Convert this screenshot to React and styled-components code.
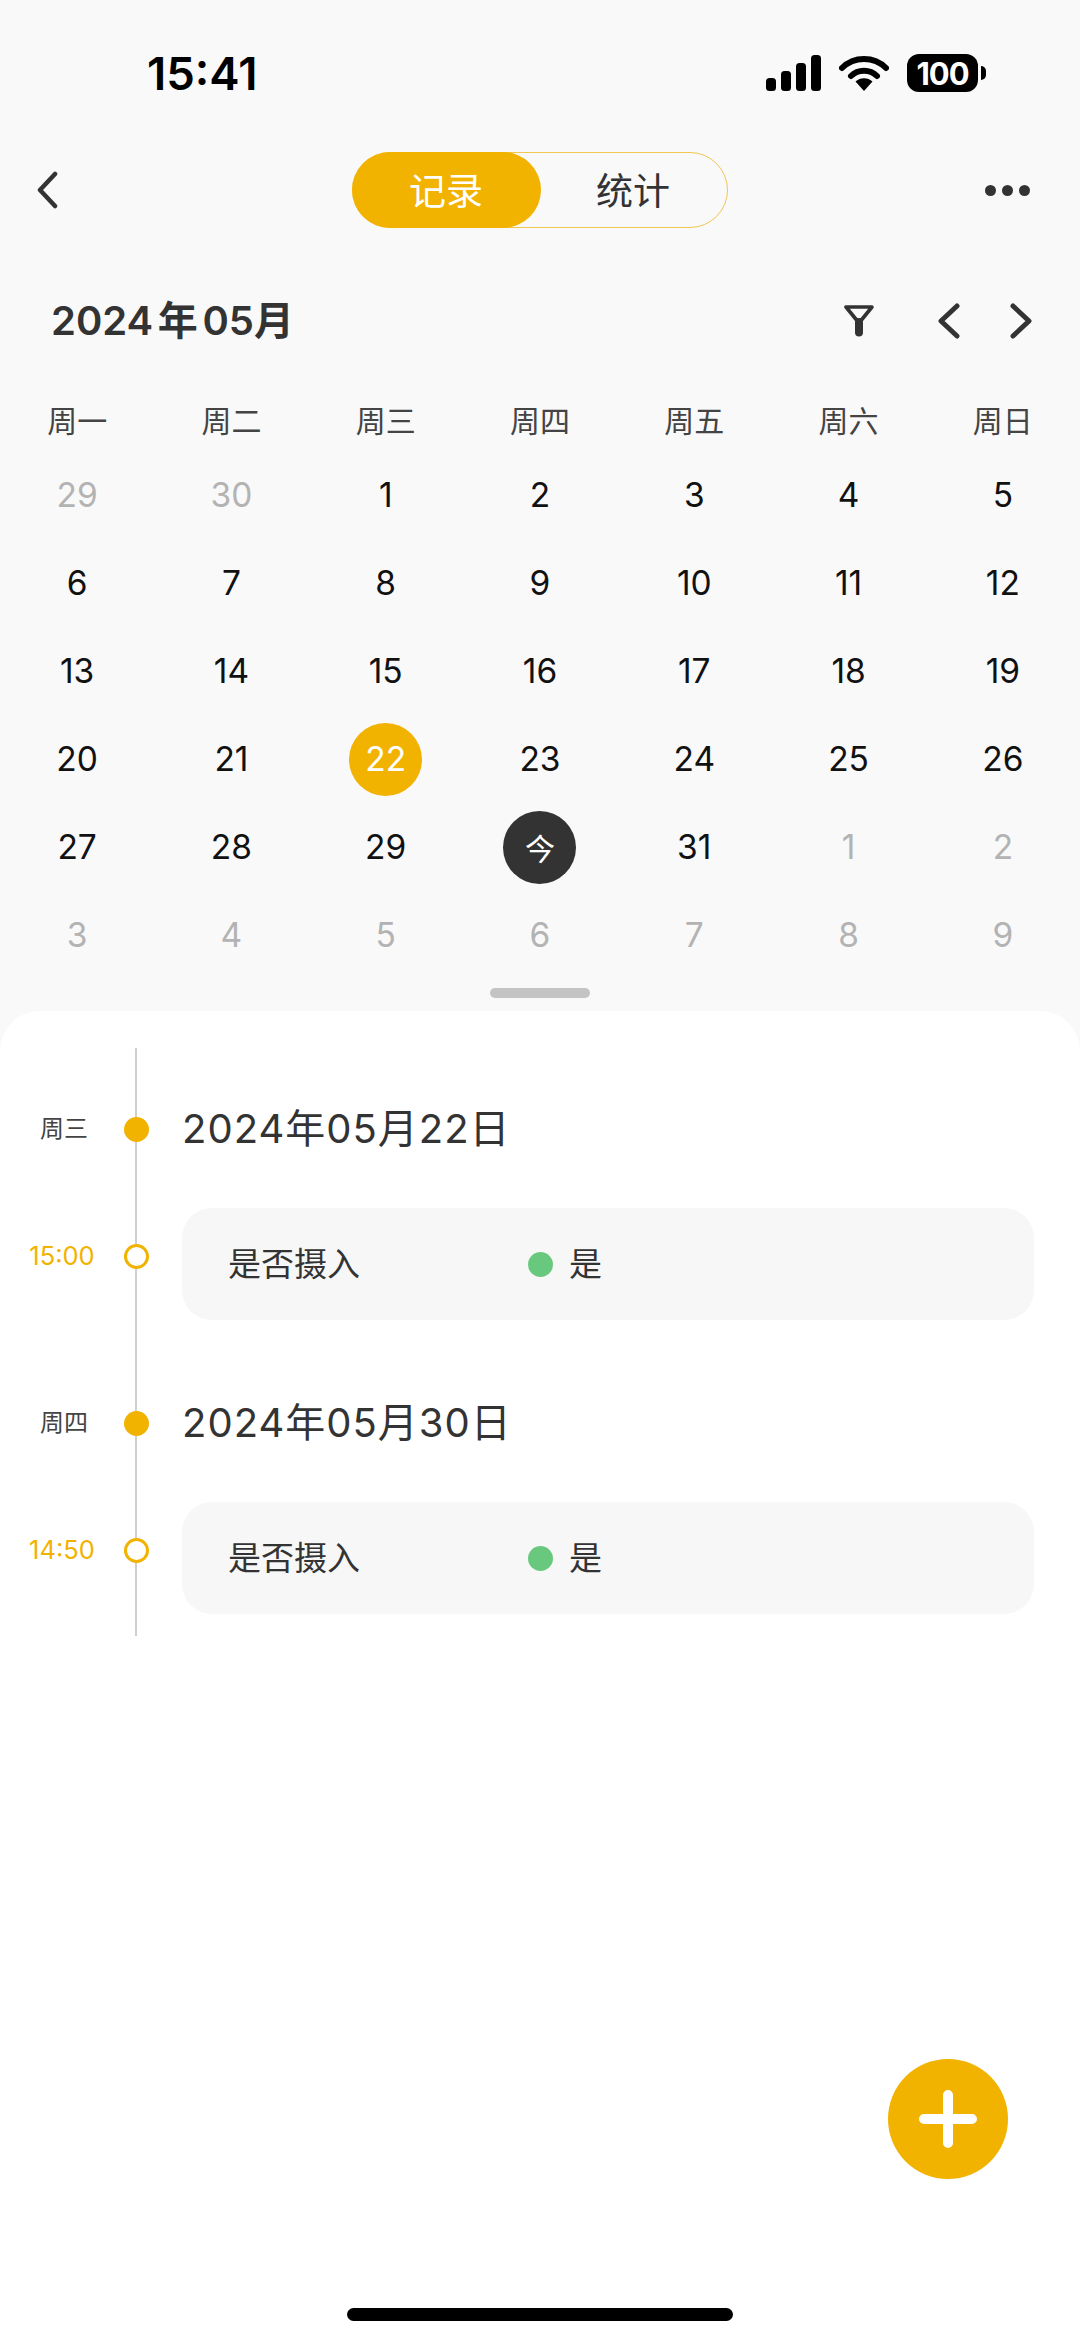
import React from "react";
import styled, { createGlobalStyle } from "styled-components";

const YELLOW = "#f2b200";
const DARK = "#333333";

const GlobalStyle = createGlobalStyle`
  html, body {
    margin: 0;
    padding: 0;
    background: #f9f9f9;
  }
  * {
    box-sizing: border-box;
  }
`;

const WEEKDAYS = ["周一", "周二", "周三", "周四", "周五", "周六", "周日"];

// Calendar cells for May 2024, "muted" ones belong to the next/previous month
const DAYS = [
  ["29", "muted"], ["30", "muted"], ["1"], ["2"], ["3"], ["4"], ["5"],
  ["6"], ["7"], ["8"], ["9"], ["10"], ["11"], ["12"],
  ["13"], ["14"], ["15"], ["16"], ["17"], ["18"], ["19"],
  ["20"], ["21"], ["22", "selected"], ["23"], ["24"], ["25"], ["26"],
  ["27"], ["28"], ["29"], ["今", "today"], ["31"], ["1", "muted"], ["2", "muted"],
  ["3", "muted"], ["4", "muted"], ["5", "muted"], ["6", "muted"], ["7", "muted"], ["8", "muted"], ["9", "muted"],
];

const RECORDS = [
  { weekday: "周三", date: "2024年05月22日", time: "15:00" },
  { weekday: "周四", date: "2024年05月30日", time: "14:50" },
];

function Chevron({ dir, width, height, stroke }) {
  const mid = height / 2;
  const d =
    dir === "left"
      ? `M${width - 3} 3 L3 ${mid} L${width - 3} ${height - 3}`
      : `M3 3 L${width - 3} ${mid} L3 ${height - 3}`;
  return (
    <svg width={width} height={height} viewBox={`0 0 ${width} ${height}`} fill="none">
      <path d={d} stroke={DARK} strokeWidth={stroke} strokeLinecap="round" strokeLinejoin="round" />
    </svg>
  );
}

function FilterIcon() {
  return (
    <svg width="30" height="32" viewBox="0 0 30 32" fill="none">
      <path d="M2 2 H28 L15 18 Z" stroke={DARK} strokeWidth="3.6" strokeLinejoin="round" />
      <path d="M15 17 V27.5" stroke={DARK} strokeWidth="8" strokeLinecap="round" />
    </svg>
  );
}

function SignalIcon() {
  return (
    <svg width="55" height="36" viewBox="0 0 55 36" fill="#000">
      <rect x="0" y="23" width="10" height="13" rx="3.5" />
      <rect x="15" y="16" width="10" height="20" rx="3.5" />
      <rect x="30" y="8" width="10" height="28" rx="3.5" />
      <rect x="45" y="0" width="10" height="36" rx="3.5" />
    </svg>
  );
}

function WifiIcon() {
  return (
    <svg width="50" height="36" viewBox="0 0 50 36" fill="none">
      <path d="M3 13 C15 1 35 1 47 13" stroke="#000" strokeWidth="6" strokeLinecap="round" />
      <path d="M12 21 C19 14 31 14 38 21" stroke="#000" strokeWidth="6" strokeLinecap="round" />
      <path d="M16.5 26.5 C21 22 29 22 33.5 26.5 L25 36 Z" fill="#000" />
    </svg>
  );
}

export default function App() {
  return (
    <Screen>
      <GlobalStyle />
      <StatusBar>
        <Clock>15:41</Clock>
        <StatusIcons>
          <SignalIcon />
          <WifiIcon />
          <Battery>100</Battery>
        </StatusIcons>
      </StatusBar>

      <NavBar>
        <Chevron dir="left" width={21} height={38} stroke={4.5} />
        <Toggle>
          <ToggleItem $active>记录</ToggleItem>
          <ToggleItem>统计</ToggleItem>
        </Toggle>
        <MoreDots>
          <i />
          <i />
          <i />
        </MoreDots>
      </NavBar>

      <MonthBar>
        <MonthTitle>2024 年 05月</MonthTitle>
        <MonthActions>
          <FilterIcon />
          <Chevron dir="left" width={22} height={36} stroke={5} />
          <Chevron dir="right" width={22} height={36} stroke={5} />
        </MonthActions>
      </MonthBar>

      <WeekRow>
        {WEEKDAYS.map((day) => (
          <WeekLabel key={day}>{day}</WeekLabel>
        ))}
      </WeekRow>

      <DayGrid>
        {DAYS.map(([label, kind], index) => (
          <DayCell key={index}>
            <DayMark $kind={kind}>{label}</DayMark>
          </DayCell>
        ))}
      </DayGrid>

      <Handle />

      <Sheet>
        <Timeline>
          {RECORDS.map((record) => (
            <Group key={record.date}>
              <DateRow>
                <SideLabel>{record.weekday}</SideLabel>
                <Marker />
                <DateText>{record.date}</DateText>
              </DateRow>
              <EntryRow>
                <SideLabel $time>{record.time}</SideLabel>
                <Marker $hollow />
                <Card>
                  <CardName>是否摄入</CardName>
                  <CardDot />
                  <CardValue>是</CardValue>
                </Card>
              </EntryRow>
            </Group>
          ))}
        </Timeline>
        <AddButton>
          <svg width="58" height="58" viewBox="0 0 58 58" fill="none">
            <path d="M29 5 V53 M5 29 H53" stroke="#fff" strokeWidth="10" strokeLinecap="round" />
          </svg>
        </AddButton>
        <HomeIndicator />
      </Sheet>
    </Screen>
  );
}

const Screen = styled.div`
  width: 1080px;
  height: 2341px;
  display: flex;
  flex-direction: column;
  overflow: hidden;
  background: #f9f9f9;
  color: ${DARK};
  font-family: "Inter", "Noto Sans CJK SC", sans-serif;
`;

const StatusBar = styled.div`
  height: 146px;
  flex: none;
  display: flex;
  align-items: center;
  justify-content: space-between;
  padding: 0 102px 0 147px;
`;

const Clock = styled.div`
  font-size: 45.5px;
  font-weight: 600;
  color: #000;
`;

const StatusIcons = styled.div`
  display: flex;
  align-items: center;
  gap: 18px;
`;

const Battery = styled.div`
  position: relative;
  width: 71px;
  height: 38px;
  border-radius: 12px;
  background: #000;
  color: #fff;
  font-size: 31px;
  font-weight: 700;
  letter-spacing: -1px;
  display: flex;
  align-items: center;
  justify-content: center;

  &::after {
    content: "";
    position: absolute;
    right: -8px;
    top: 12px;
    width: 5px;
    height: 14px;
    border-radius: 0 7px 7px 0;
    background: #000;
  }
`;

const NavBar = styled.div`
  height: 76px;
  flex: none;
  margin-top: 6px;
  display: flex;
  align-items: center;
  justify-content: space-between;
  padding: 0 50px 0 37px;
`;

const Toggle = styled.div`
  width: 376px;
  height: 76px;
  border: 1px solid #f0c650;
  border-radius: 38px;
  display: grid;
  grid-template-columns: 188px 1fr;
  margin-left: 36px;
`;

const ToggleItem = styled.div`
  margin: -1px 0 -1px -1px;
  padding-bottom: 3px;
  display: flex;
  align-items: center;
  justify-content: center;
  font-size: 37px;
  border-radius: 38px;
  color: ${(p) => (p.$active ? "#fff" : DARK)};
  background: ${(p) => (p.$active ? YELLOW : "transparent")};
`;

const MoreDots = styled.div`
  width: 45px;
  display: flex;
  justify-content: space-between;

  i {
    width: 11px;
    height: 11px;
    border-radius: 50%;
    background: ${DARK};
  }
`;

const MonthBar = styled.div`
  height: 60px;
  flex: none;
  margin-top: 63px;
  display: flex;
  align-items: center;
  justify-content: space-between;
  padding: 0 48px 0 51px;
`;

const MonthTitle = styled.div`
  font-size: 40px;
  font-weight: 600;
  word-spacing: -5.5px;
  padding-bottom: 7px;
`;

const MonthActions = styled.div`
  display: flex;
  align-items: center;
  gap: 64px;

  svg:last-child {
    margin-left: -14px;
  }
`;

const WeekRow = styled.div`
  flex: none;
  height: 50px;
  margin-top: 43px;
  display: grid;
  grid-template-columns: repeat(7, 1fr);
  align-items: center;
`;

const WeekLabel = styled.div`
  text-align: center;
  font-size: 30px;
  color: #444;
`;

const DayGrid = styled.div`
  flex: none;
  margin-top: 7px;
  display: grid;
  grid-template-columns: repeat(7, 1fr);
  grid-auto-rows: 88px;
`;

const DayCell = styled.div`
  display: flex;
  align-items: center;
  justify-content: center;
`;

const DayMark = styled.div`
  width: 73px;
  height: 73px;
  border-radius: 50%;
  display: flex;
  align-items: center;
  justify-content: center;
  font-size: ${(p) => (p.$kind === "today" ? "30px" : "33.5px")};
  color: ${(p) =>
    p.$kind === "muted"
      ? "#b3b3b3"
      : p.$kind === "selected" || p.$kind === "today"
      ? "#fff"
      : "#111"};
  background: ${(p) =>
    p.$kind === "selected" ? YELLOW : p.$kind === "today" ? DARK : "transparent"};
`;

const Handle = styled.div`
  flex: none;
  width: 100px;
  height: 10px;
  margin: 9px auto 13px;
  border-radius: 5px;
  background: #c4c4c4;
`;

const Sheet = styled.div`
  position: relative;
  flex: 1;
  padding: 37px 46px 0 0;
  border-radius: 40px 40px 0 0;
  background: #fff;
`;

const Timeline = styled.div`
  position: relative;
  display: flex;
  flex-direction: column;
  gap: 73px;
  padding: 51px 0 22px;

  &::before {
    content: "";
    position: absolute;
    left: 135px;
    top: 0;
    bottom: 0;
    width: 2px;
    background: #cfcfcf;
  }
`;

const Group = styled.div`
  display: flex;
  flex-direction: column;
  gap: 49px;
`;

const DateRow = styled.div`
  height: 60px;
  display: flex;
  align-items: center;
`;

const EntryRow = styled.div`
  display: flex;
  align-items: flex-start;
`;

const SideLabel = styled.div`
  width: 124px;
  flex: none;
  text-align: center;
  font-size: ${(p) => (p.$time ? "25.5px" : "24px")};
  line-height: 30px;
  padding-left: ${(p) => (p.$time ? "0" : "4px")};
  margin-top: ${(p) => (p.$time ? "33px" : "0")};
  color: ${(p) => (p.$time ? YELLOW : "#444")};
`;

const Marker = styled.div`
  position: relative;
  flex: none;
  width: 25px;
  height: 25px;
  border-radius: 50%;
  margin-top: ${(p) => (p.$hollow ? "36px" : "0")};
  border: 3px solid ${YELLOW};
  background: ${(p) => (p.$hollow ? "#fff" : YELLOW)};
`;

const DateText = styled.div`
  margin-left: 33px;
  font-size: 40px;
  letter-spacing: 1px;
  padding-bottom: 7px;
`;

const Card = styled.div`
  flex: 1;
  height: 112px;
  margin-left: 33px;
  border-radius: 30px;
  padding: 0 0 4px 46px;
  background: #f7f7f7;
  display: flex;
  align-items: center;
`;

const CardName = styled.div`
  width: 300px;
  font-size: 33px;
`;

const CardDot = styled.div`
  width: 25px;
  height: 25px;
  margin-top: 4px;
  border-radius: 50%;
  background: #68c97e;
`;

const CardValue = styled.div`
  margin-left: 16px;
  font-size: 33px;
`;

const AddButton = styled.div`
  position: absolute;
  right: 72px;
  bottom: 162px;
  width: 120px;
  height: 120px;
  border-radius: 50%;
  background: ${YELLOW};
  display: flex;
  align-items: center;
  justify-content: center;
`;

const HomeIndicator = styled.div`
  position: absolute;
  left: 347px;
  bottom: 20px;
  width: 386px;
  height: 13px;
  border-radius: 7px;
  background: #000;
`;
